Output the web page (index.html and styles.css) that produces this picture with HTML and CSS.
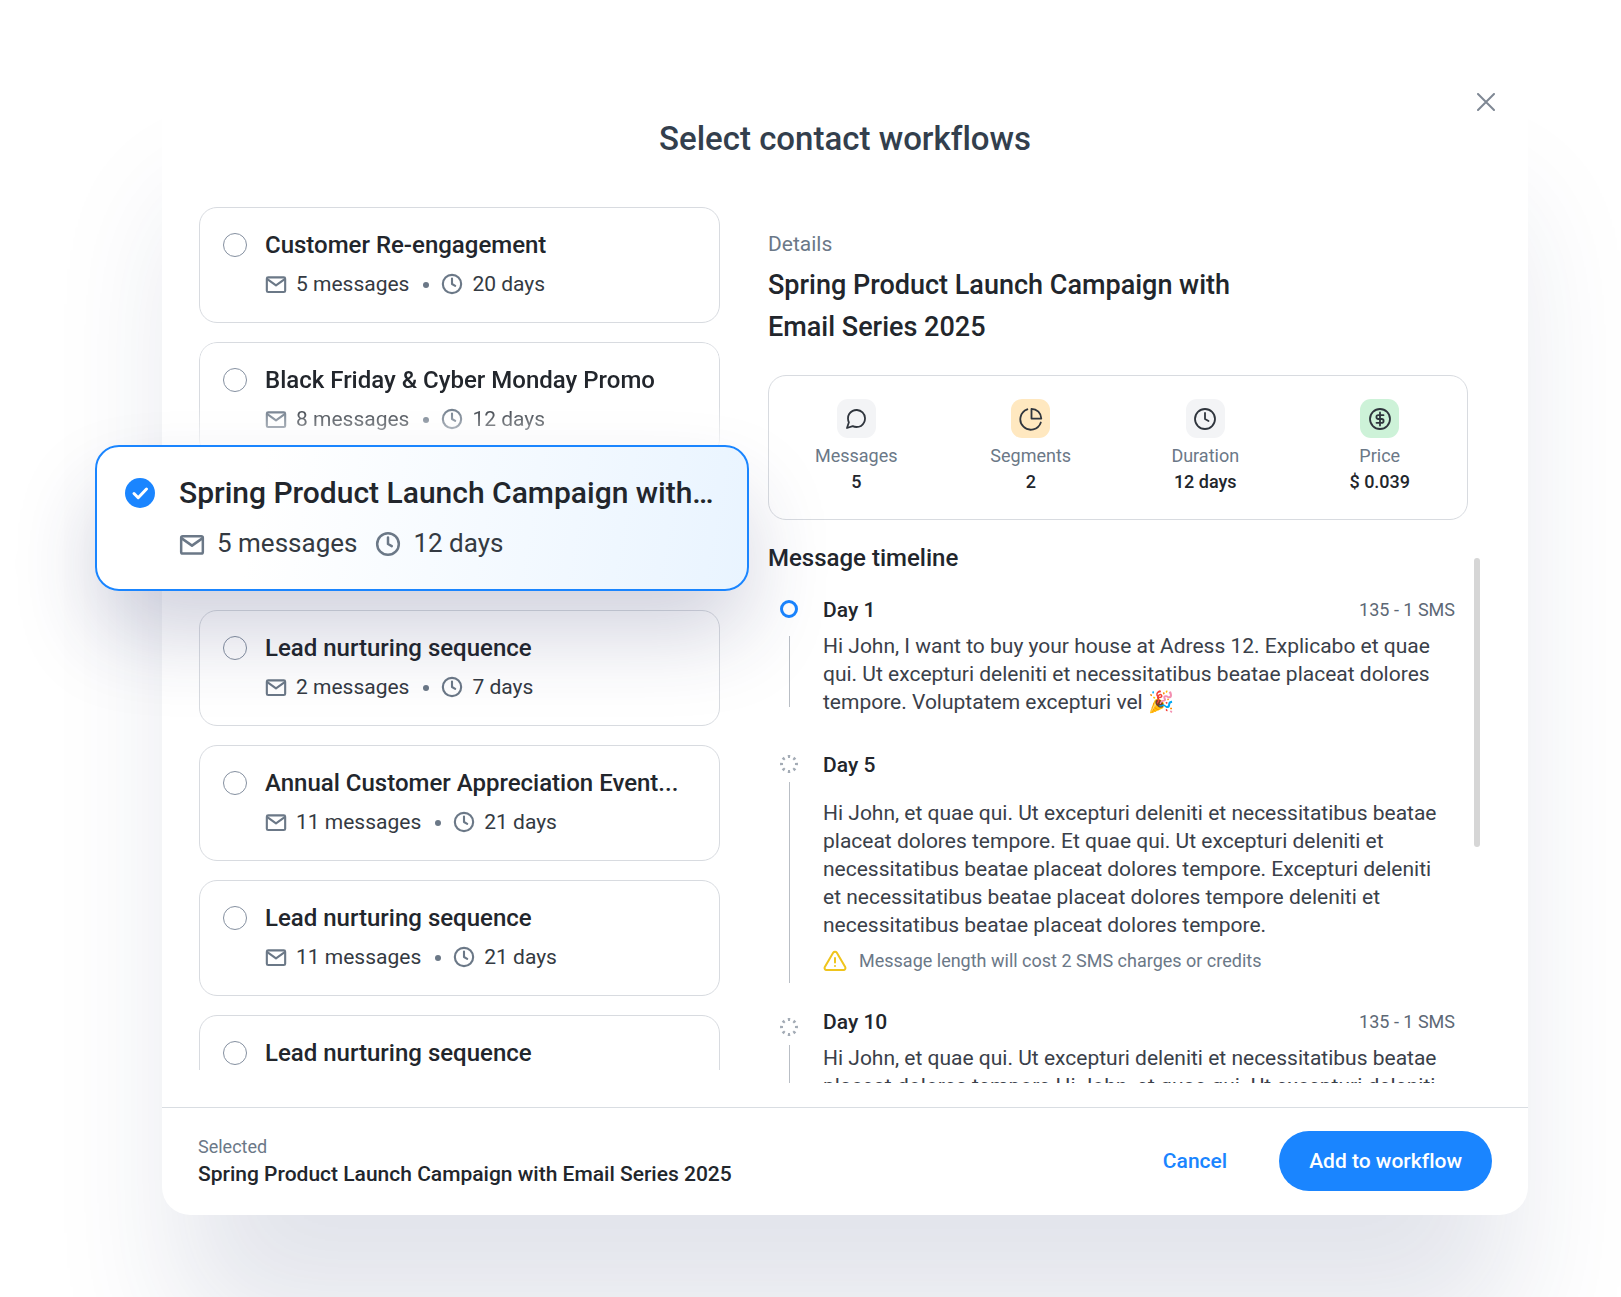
FILE: index.html
```html
<!DOCTYPE html>
<html lang="en">
<head>
<meta charset="utf-8">
<meta name="viewport" content="width=device-width, initial-scale=1">
<title>Select contact workflows</title>
<link rel="stylesheet" href="styles.css">
</head>
<body>
<svg class="sprite" aria-hidden="true">
  <symbol id="mail" viewBox="0 0 24 24"><rect x="2" y="4.800" width="20" height="16" rx="1.500"/><path d="M2.500 6.800 12 13.500l9.500-6.700"/></symbol>
  <symbol id="clock" viewBox="0 0 24 24"><circle cx="12" cy="12" r="10"/><path d="M12 6v6l3.500 2"/></symbol>
  <symbol id="chat" viewBox="0 0 24 24"><path d="M21 11.500a8.400 8.400 0 0 1-.9 3.800 8.500 8.500 0 0 1-7.600 4.700 8.400 8.400 0 0 1-3.800-.9L3 21l1.900-5.700a8.400 8.400 0 0 1-.9-3.800 8.500 8.500 0 0 1 4.700-7.600 8.400 8.400 0 0 1 3.800-.9h.5a8.500 8.500 0 0 1 8 8z"/></symbol>
  <symbol id="pie" viewBox="0 0 24 24"><path d="M21.800 15.500A10.500 10.500 0 1 1 8.300 2.300"/><path d="M22.300 11.600A10 10 0 0 0 12.500 1.800v9.800z"/></symbol>
  <symbol id="dollar" viewBox="0 0 24 24"><circle cx="12" cy="12" r="10"/><path d="M12 5.500v13M15.500 8.200H10.300a1.900 1.900 0 0 0 0 3.800h3.400a1.900 1.900 0 0 1 0 3.800H8.500"/></symbol>
  <symbol id="warn" viewBox="0 0 24 24"><path d="M10.300 3.600 1.800 18a2 2 0 0 0 1.700 3h17a2 2 0 0 0 1.700-3L13.700 3.600a2 2 0 0 0-3.400 0z"/><path d="M12 9v4.500M12 17v.1"/></symbol>
</svg>
<main class="modal">
  <header class="modal-header">
    <h1 class="modal-title">Select contact workflows</h1>
    <button class="close" type="button" aria-label="Close"><svg viewBox="0 0 18 18"><path d="M1 1l16 16M17 1 1 17"/></svg></button>
  </header>

  <div class="modal-body">
    <div class="list">
      <label class="card">
        <input class="radio" type="radio" name="workflow">
        <span class="card-text">
          <span class="card-title">Customer Re-engagement</span>
          <span class="meta"><svg class="icon"><use href="#mail"/></svg><span>5 messages</span><i class="dot"></i><svg class="icon"><use href="#clock"/></svg><span>20 days</span></span>
        </span>
      </label>
      <label class="card card-faded">
        <input class="radio" type="radio" name="workflow">
        <span class="card-text">
          <span class="card-title">Black Friday &amp; Cyber Monday Promo</span>
          <span class="meta"><svg class="icon"><use href="#mail"/></svg><span>8 messages</span><i class="dot"></i><svg class="icon"><use href="#clock"/></svg><span>12 days</span></span>
        </span>
      </label>
      <label class="card card-selected">
        <input class="radio" type="radio" name="workflow" checked>
        <svg class="check" viewBox="0 0 30 30"><path d="M9 15.500l4.200 4.200L21.500 11"/></svg>
        <span class="card-text">
          <span class="card-title">Spring Product Launch Campaign with…</span>
          <span class="meta"><svg class="icon"><use href="#mail"/></svg><span>5 messages</span><svg class="icon"><use href="#clock"/></svg><span>12 days</span></span>
        </span>
      </label>
      <label class="card">
        <input class="radio" type="radio" name="workflow">
        <span class="card-text">
          <span class="card-title">Lead nurturing sequence</span>
          <span class="meta"><svg class="icon"><use href="#mail"/></svg><span>2 messages</span><i class="dot"></i><svg class="icon"><use href="#clock"/></svg><span>7 days</span></span>
        </span>
      </label>
      <label class="card">
        <input class="radio" type="radio" name="workflow">
        <span class="card-text">
          <span class="card-title">Annual Customer Appreciation Event...</span>
          <span class="meta"><svg class="icon"><use href="#mail"/></svg><span>11 messages</span><i class="dot"></i><svg class="icon"><use href="#clock"/></svg><span>21 days</span></span>
        </span>
      </label>
      <label class="card">
        <input class="radio" type="radio" name="workflow">
        <span class="card-text">
          <span class="card-title">Lead nurturing sequence</span>
          <span class="meta"><svg class="icon"><use href="#mail"/></svg><span>11 messages</span><i class="dot"></i><svg class="icon"><use href="#clock"/></svg><span>21 days</span></span>
        </span>
      </label>
      <label class="card card-last">
        <input class="radio" type="radio" name="workflow">
        <span class="card-text">
          <span class="card-title">Lead nurturing sequence</span>
        </span>
      </label>
    </div>

    <section class="details">
      <p class="eyebrow">Details</p>
      <h2 class="details-title">Spring Product Launch Campaign with Email Series 2025</h2>
      <dl class="stats">
        <div class="stat"><span class="stat-icon"><svg><use href="#chat"/></svg></span><dt>Messages</dt><dd>5</dd></div>
        <div class="stat"><span class="stat-icon stat-amber"><svg><use href="#pie"/></svg></span><dt>Segments</dt><dd>2</dd></div>
        <div class="stat"><span class="stat-icon"><svg><use href="#clock"/></svg></span><dt>Duration</dt><dd>12 days</dd></div>
        <div class="stat"><span class="stat-icon stat-green"><svg><use href="#dollar"/></svg></span><dt>Price</dt><dd>$ 0.039</dd></div>
      </dl>
      <div class="timeline">
        <h3 class="timeline-title">Message timeline</h3>
        <ol class="steps">
          <li class="step step-active">
            <span class="marker"><svg class="ring" viewBox="0 0 18 18"><circle cx="9" cy="9" r="7.500"/></svg><i class="line"></i></span>
            <div class="step-content">
              <div class="step-head"><h4>Day 1</h4><span class="count">135 - 1 SMS</span></div>
              <p class="message">Hi John, I want to buy your house at Adress 12. Explicabo et quae qui. Ut excepturi deleniti et necessitatibus beatae placeat dolores tempore. Voluptatem excepturi vel 🎉</p>
            </div>
          </li>
          <li class="step step-long">
            <span class="marker"><svg class="ring" viewBox="0 0 18 18"><circle cx="9" cy="9" r="7.500" pathLength="80"/></svg><i class="line"></i></span>
            <div class="step-content">
              <div class="step-head"><h4>Day 5</h4></div>
              <p class="message">Hi John, et quae qui. Ut excepturi deleniti et necessitatibus beatae placeat dolores tempore. Et quae qui. Ut excepturi deleniti et necessitatibus beatae placeat dolores tempore. Excepturi deleniti et necessitatibus beatae placeat dolores tempore deleniti et necessitatibus beatae placeat dolores tempore.</p>
              <p class="warning"><svg><use href="#warn"/></svg>Message length will cost 2 SMS charges or credits</p>
            </div>
          </li>
          <li class="step step-next">
            <span class="marker"><svg class="ring" viewBox="0 0 18 18"><circle cx="9" cy="9" r="7.500" pathLength="80"/></svg><i class="line"></i></span>
            <div class="step-content">
              <div class="step-head"><h4>Day 10</h4><span class="count">135 - 1 SMS</span></div>
              <p class="message">Hi John, et quae qui. Ut excepturi deleniti et necessitatibus beatae placeat dolores tempore Hi John, et quae qui. Ut excepturi deleniti</p>
            </div>
          </li>
        </ol>
        <i class="scroll-thumb"></i>
      </div>
    </section>
  </div>

  <footer class="modal-footer">
    <div class="selection"><span class="selection-label">Selected</span><strong class="selection-name">Spring Product Launch Campaign with Email Series 2025</strong></div>
    <div class="actions">
      <button class="btn-text" type="button">Cancel</button>
      <button class="btn-primary" type="button">Add to workflow</button>
    </div>
  </footer>
</main>
</body>
</html>
```
FILE: styles.css
```css
* { box-sizing: border-box; }

body {
  margin: 0;
  padding: 62px 93px 83px 162px;
  background: #fff;
  color: #22262c;
  font: 400 21px/28px Roboto, "Liberation Sans", sans-serif;
  font-variant-ligatures: none;
  overflow-x: hidden;
}

h1, h2, h3, h4, p, dl, dd, ol { margin: 0; padding: 0; }
h1, h2, h3, h4 { font-weight: 500; }
ol { list-style: none; }
button { border: 0; background: none; padding: 0; font: inherit; font-variant-ligatures: none; cursor: pointer; }
svg { fill: none; stroke: currentColor; stroke-linecap: round; stroke-linejoin: round; flex: none; }
.sprite { display: none; }

.modal {
  position: relative;
  border-radius: 28px;
  background: #fff;
  box-shadow: 0 130px 130px -20px rgba(30, 45, 100, .13);
}

.modal-header { padding: 57px 37px 48px; text-align: center; }
.modal-title { font-size: 33px; line-height: 40px; color: #333f4d; }
.close { position: absolute; top: 31px; right: 33px; width: 18px; height: 18px; display: flex; color: #7f8894; }
.close svg { width: 18px; height: 18px; stroke-width: 2; }

.modal-body {
  display: grid;
  grid-template-columns: 521fr 700fr;
  gap: 48px;
  align-items: start;
  padding: 0 60px 24px 37px;
}

/* Workflow list */
.list { display: flex; flex-direction: column; gap: 19px; max-height: 863px; overflow-x: visible; overflow-y: clip; position: relative; z-index: 1; }
.card {
  display: flex;
  flex: none;
  gap: 18px;
  padding: 23px 23px 24px;
  border: 1px solid #d8dbe0;
  border-radius: 18px;
  cursor: pointer;
}
.card-text { display: flex; flex-direction: column; gap: 11px; min-width: 0; }
.card-title { font-size: 24px; font-weight: 500; white-space: nowrap; }
.card-faded { mask-image: linear-gradient(#000 55%, transparent); }
.card-last { min-height: 116px; }
.radio { appearance: none; flex: none; width: 24px; height: 24px; margin: 2px 0; border: 1px solid #8590a0; border-radius: 50%; }
.meta { display: flex; align-items: center; color: #343a42; white-space: nowrap; }
.meta .icon { width: 22px; height: 22px; margin-right: 9px; color: #6b7887; stroke-width: 2.3; }
.dot { width: 6px; height: 6px; margin: 2px 12px 0 14px; border-radius: 50%; background: #6b7887; }

.card-selected {
  position: relative;
  gap: 24px;
  margin: -32px -29px 0 -104px;
  padding: 29px 28px 30px;
  border: 2px solid #1a85ff;
  border-radius: 24px;
  background: linear-gradient(100deg, #fff 25%, #e9f4ff);
  box-shadow: 0 46px 84px -4px rgba(40, 42, 100, .21);
}
.card-selected .radio { width: 30px; height: 30px; border: 0; background: #1a85ff; }
.card-selected .check { position: absolute; left: 28px; top: 31px; width: 30px; height: 30px; color: #fff; stroke-width: 3; }
.card-selected .card-text { gap: 18px; }
.card-selected .card-title { font-size: 30px; line-height: 34px; }
.card-selected .meta { font-size: 26px; line-height: 31px; }
.card-selected .meta .icon { width: 26px; height: 26px; margin-right: 12px; }
.card-selected .meta span + .icon { margin-left: 18px; }

/* Details */
.details { padding-top: 23px; }
.eyebrow { color: #6b7887; }
.details-title { max-width: 500px; padding: 6px 0 27px; font-size: 27px; line-height: 42px; }
.stats { display: grid; grid-template-columns: repeat(4, 1fr); padding: 23px 0 24px; border: 1px solid #d8dbe0; border-radius: 18px; }
.stat { display: flex; flex-direction: column; align-items: center; font-size: 18px; line-height: 26px; }
.stat-icon { display: flex; align-items: center; justify-content: center; width: 39px; height: 39px; margin-bottom: 5px; border-radius: 11px; background: #f3f4f6; color: #2f353d; }
.stat-icon svg { width: 24px; height: 24px; stroke-width: 1.8; }
.stat-amber { background: #ffe8c0; }
.stat-green { background: #cdf2d8; }
.stat dt { color: #6b7887; }
.stat dd { font-weight: 500; }

.timeline { position: relative; margin-top: 24px; max-height: 539px; overflow-y: clip; overflow-x: visible; }
.timeline-title { font-size: 24px; line-height: 28px; }
.steps { display: flex; flex-direction: column; gap: 35px; padding: 24px 13px 0 0; }
.step { display: grid; grid-template-columns: 42px 1fr; gap: 13px; }
.marker { display: flex; flex-direction: column; align-items: center; gap: 9px; padding-top: 4px; color: #a3abb5; }
.ring { width: 18px; height: 18px; stroke-width: 3; stroke-linecap: butt; stroke-dasharray: 4 6; stroke-dashoffset: 2; }
.line { flex: 1; width: 1px; background: #b9bec5; }
.step-active .marker { gap: 18px; margin-bottom: 9px; }
.step-active .ring { color: #1a85ff; stroke-dasharray: none; }
.step-long .marker { margin-bottom: -10px; }
.step-long .message { margin-top: 20px; }
.step-next .marker { padding-top: 10px; }
.step-head { display: flex; justify-content: space-between; }
.step-head h4 { font-size: 21px; }
.count { font-size: 18px; color: #5d6875; }
.message { max-width: 625px; margin-top: 8px; color: #3a4049; }
.warning { display: flex; align-items: center; gap: 12px; margin-top: 10px; font-size: 18px; line-height: 24px; color: #6b7887; }
.warning svg { width: 24px; height: 24px; stroke-width: 2; color: #efc41c; }
.scroll-thumb { position: absolute; top: 14px; right: -12px; width: 6px; height: 289px; border-radius: 3px; background: #d6d6d6; }

/* Footer */
.modal-footer { display: flex; align-items: center; justify-content: space-between; padding: 23px 36px 24px; border-top: 1px solid #d9dde2; }
.selection { display: flex; flex-direction: column; }
.selection-label { font-size: 18px; line-height: 26px; color: #6b7887; }
.selection-name { font-weight: 500; }
.actions { display: flex; align-items: center; gap: 52px; font-weight: 500; }
.btn-text { color: #1a85ff; }
.btn-primary { height: 60px; padding: 0 30px; border-radius: 30px; background: #1a85ff; color: #fff; }
```
